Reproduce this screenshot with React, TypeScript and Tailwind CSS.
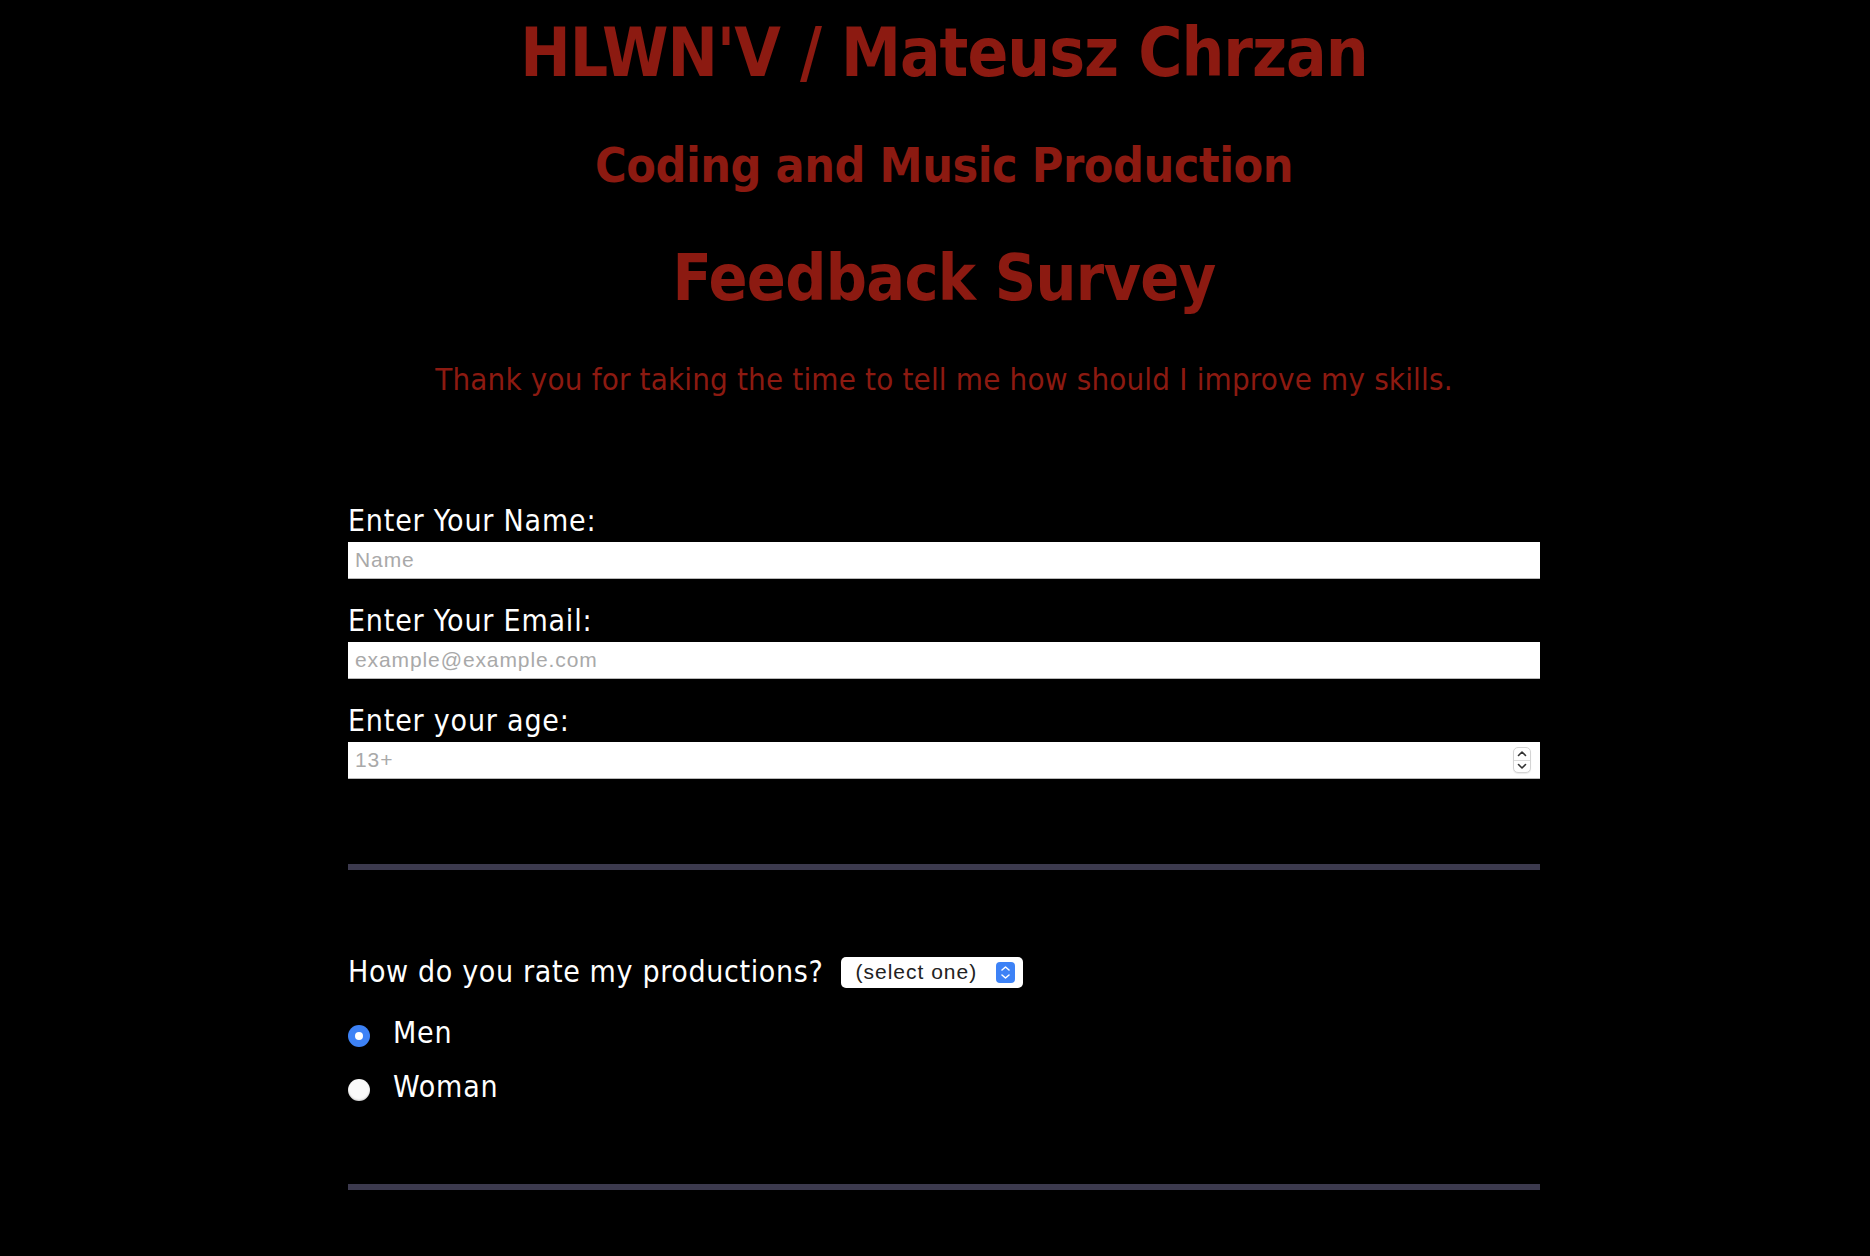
import React from "react";

const tahoma = { fontFamily: '"DejaVu Sans Condensed", "DejaVu Sans", sans-serif' };
const sysFont = { fontFamily: '"Liberation Sans", Arial, sans-serif' };

function SpinBox() {
  return (
    <div className="mr-[9px] flex h-[26px] w-[18px] flex-col items-center justify-between rounded-[5px] border border-[#d4d4d4] bg-white py-[2px] shadow-[0_1px_1px_rgba(0,0,0,0.08)]">
      <svg width="10" height="7" viewBox="0 0 10 7">
        <path d="M1.5 5.5 L5 2 L8.5 5.5" fill="none" stroke="#333" strokeWidth="1.6" strokeLinecap="round" strokeLinejoin="round" />
      </svg>
      <div className="h-px w-full bg-[#dcdcdc]" />
      <svg width="10" height="7" viewBox="0 0 10 7">
        <path d="M1.5 1.5 L5 5 L8.5 1.5" fill="none" stroke="#333" strokeWidth="1.6" strokeLinecap="round" strokeLinejoin="round" />
      </svg>
    </div>
  );
}

function Field({ label, placeholder, spinner, top }: { label: string; placeholder: string; spinner?: boolean; top: string }) {
  return (
    <div className={top}>
      <label className="block h-[36px] text-[30px] leading-[33px] tracking-[0.8px] text-white" style={tahoma}>
        {label}
      </label>
      <div className="mt-[2px] flex h-[37px] items-center border-b border-[#b9b9b9] bg-white">
        <input
          type="text"
          placeholder={placeholder}
          className="h-full min-w-0 flex-1 bg-transparent pl-[7px] text-[21px] tracking-[0.9px] text-black outline-none placeholder:text-[#a9a9a9]"
          style={sysFont}
        />
        {spinner && <SpinBox />}
      </div>
    </div>
  );
}

function Radio({ label, checked, top }: { label: string; checked?: boolean; top: string }) {
  return (
    <div className={`flex h-[36px] items-center ${top}`}>
      <div
        className={`mt-[6px] flex h-[22px] w-[22px] items-center justify-center rounded-full ${
          checked ? "bg-[#3d82f6]" : "bg-[#fafafa] shadow-[inset_0_-1px_2px_rgba(0,0,0,0.2)]"
        }`}
      >
        {checked && <div className="h-[8px] w-[8px] rounded-full bg-white" />}
      </div>
      <span className="ml-[23px] text-[30px] leading-[36px] tracking-[0.8px] text-white" style={tahoma}>
        {label}
      </span>
    </div>
  );
}

export default function App() {
  return (
    <div className="min-h-screen bg-black pl-[18px] pt-[13px]">
      <header className="text-center text-[#8c1a11]" style={tahoma}>
        <h1 className="text-[67px] font-bold leading-[80px] tracking-[-1px]">HLWN'V / Mateusz Chrzan</h1>
        <h2 className="mt-[43px] text-[48px] font-bold leading-[58px] tracking-[-0.45px]">Coding and Music Production</h2>
        <h3 className="mt-[46px] text-[64px] font-bold leading-[76px] tracking-[-0.7px]">Feedback Survey</h3>
        <p className="mt-[44px] text-[31px] leading-[38px] tracking-[0.18px]">
          Thank you for taking the time to tell me how should I improve my skills.
        </p>
      </header>

      <form className="mx-auto w-[1192px]">
        <Field top="mt-[106px]" label="Enter Your Name:" placeholder="Name" />
        <Field top="mt-[25px]" label="Enter Your Email:" placeholder="example@example.com" />
        <Field top="mt-[25px]" label="Enter your age:" placeholder="13+" spinner />

        <div className="mt-[85px] h-[6px] bg-[#3c3a4e]" />

        <div className="mt-[84px] flex h-[36px] items-center">
          <span className="text-[30px] leading-[36px] tracking-[0.65px] text-white" style={tahoma}>
            How do you rate my productions?
          </span>
          <div
            className="ml-[18px] flex h-[31px] w-[182px] items-center justify-between rounded-[5px] bg-white pl-[14px] pr-[8px]"
            style={sysFont}
          >
            <span className="text-[21px] tracking-[1px] text-[#222]">(select one)</span>
            <div className="flex h-[21px] w-[19px] flex-col items-center justify-center gap-[3px] rounded-[4px] bg-[#3d82f6]">
              <svg width="9" height="5" viewBox="0 0 9 5">
                <path d="M1 4 L4.5 1 L8 4" fill="none" stroke="#fff" strokeWidth="1.5" strokeLinecap="round" strokeLinejoin="round" />
              </svg>
              <svg width="9" height="5" viewBox="0 0 9 5">
                <path d="M1 1 L4.5 4 L8 1" fill="none" stroke="#fff" strokeWidth="1.5" strokeLinecap="round" strokeLinejoin="round" />
              </svg>
            </div>
          </div>
        </div>

        <Radio top="mt-[25px]" label="Men" checked />
        <Radio top="mt-[18px]" label="Woman" />

        <div className="mt-[79px] h-[6px] bg-[#3c3a4e]" />
        <div className="h-[66px]" />
      </form>
    </div>
  );
}
